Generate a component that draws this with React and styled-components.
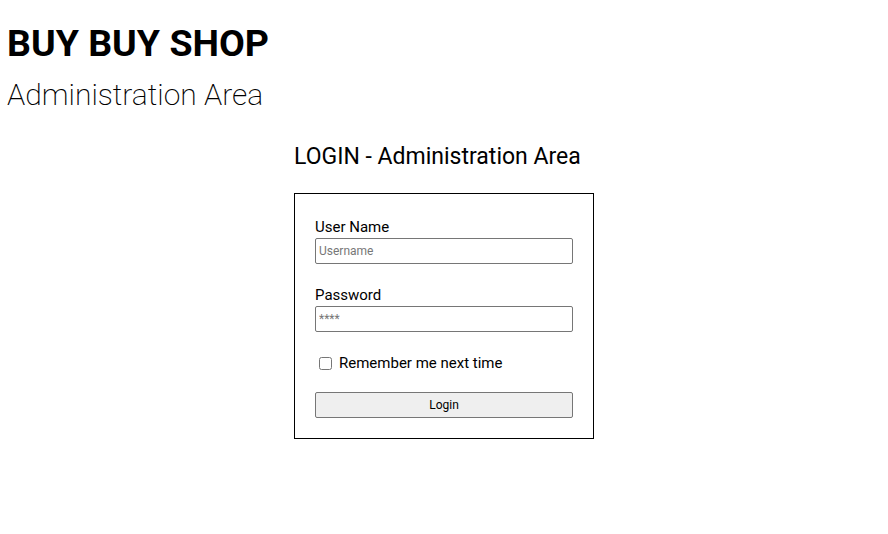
import React from "react";
import styled, { createGlobalStyle } from "styled-components";

const GlobalStyle = createGlobalStyle`
  html, body {
    margin: 0;
    padding: 0;
    background: #fff;
  }
  body {
    font-family: "Roboto", "Liberation Sans", sans-serif;
    color: #000;
  }
`;

const Page = styled.div`
  padding: 0 7px;
`;

const Header = styled.header`
  display: flex;
  flex-direction: column;
  gap: 10px;
  padding-top: 21px;
`;

const Title = styled.h1`
  margin: 0;
  font-size: 37.5px;
  line-height: 44px;
  font-weight: 700;
`;

const Subtitle = styled.h2`
  margin: 0;
  font-size: 30px;
  line-height: 40px;
  font-weight: 200;
`;

const LoginSection = styled.section`
  width: 300px;
  margin: 28px auto 0;
`;

const LoginHeading = styled.h3`
  margin: 0 0 22px;
  font-size: 23px;
  line-height: 28px;
  font-weight: 400;
`;

const Box = styled.form`
  box-sizing: border-box;
  border: 1px solid #000;
  padding: 22px 20px 20px;
  display: flex;
  flex-direction: column;
`;

const Field = styled.div`
  display: flex;
  flex-direction: column;
  margin-bottom: 20px;
`;

const Label = styled.label`
  font-size: 15px;
  line-height: 22px;
`;

const Input = styled.input`
  box-sizing: border-box;
  height: 26px;
  width: 100%;
  border: 1px solid #767676;
  border-radius: 2px;
  padding: 0 3px;
  font-family: inherit;
  font-size: 12px;
  &::placeholder {
    color: #777;
  }
`;

const CheckRow = styled.label`
  display: flex;
  align-items: center;
  gap: 7px;
  padding-left: 4px;
  font-size: 15px;
  line-height: 22px;
  margin-bottom: 18px;
  input {
    margin: 0;
    width: 13px;
    height: 13px;
  }
`;

const Button = styled.button`
  box-sizing: border-box;
  height: 26px;
  width: 100%;
  background: #efefef;
  border: 1px solid #767676;
  border-radius: 2px;
  font-family: inherit;
  font-size: 12px;
  color: #000;
`;

export default function App() {
  return (
    <Page>
      <GlobalStyle />
      <Header>
        <Title>BUY BUY SHOP</Title>
        <Subtitle>Administration Area</Subtitle>
      </Header>
      <LoginSection>
        <LoginHeading>LOGIN - Administration Area</LoginHeading>
        <Box onSubmit={(e) => e.preventDefault()}>
          <Field>
            <Label>User Name</Label>
            <Input placeholder="Username" />
          </Field>
          <Field>
            <Label>Password</Label>
            <Input type="password" placeholder="****" />
          </Field>
          <CheckRow>
            <input type="checkbox" />
            Remember me next time
          </CheckRow>
          <Button type="submit">Login</Button>
        </Box>
      </LoginSection>
    </Page>
  );
}
